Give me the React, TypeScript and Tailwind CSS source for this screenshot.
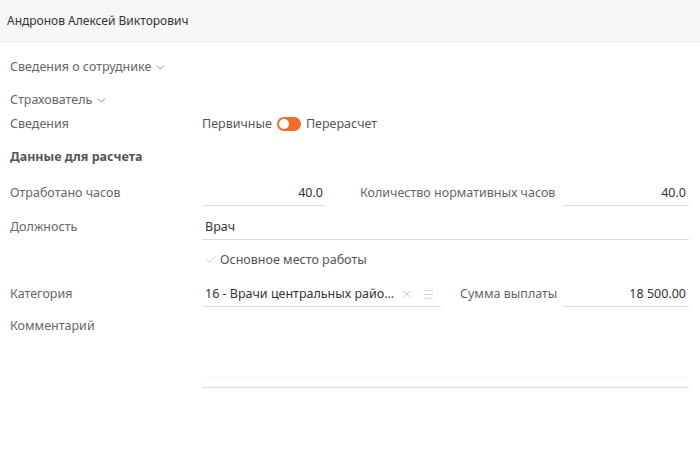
import { Check, ChevronDown, X, Menu } from "lucide-react";

const font = { fontFamily: '"Noto Sans", "Liberation Sans", sans-serif' };

function Field({ value, width, align = "right" }: { value: string; width: string; align?: "left" | "right" }) {
  return (
    <div
      className={`${width} shrink-0 h-[25px] border-b border-[#dcdcdc] flex items-center px-[3px] text-[#333] ${
        align === "right" ? "justify-end" : "justify-start"
      }`}
    >
      {value}
    </div>
  );
}

export default function App() {
  return (
    <div className="w-[700px] h-[472px] bg-white overflow-hidden text-[12.5px] whitespace-nowrap" style={font}>
      {/* header */}
      <div className="h-[42px] bg-[#f7f7f7] border-b border-[#e9e9e9] px-[7px] flex items-center text-[12px] text-[#333]">
        Андронов Алексей Викторович
      </div>

      <div className="pl-[10px] pr-[11px] text-[#666]">
        <div className="mt-[15px] h-[20px] flex items-center gap-[3px]">
          Сведения о сотруднике
          <ChevronDown size={13} strokeWidth={1.5} className="text-[#777]" />
        </div>
        <div className="mt-[13px] h-[20px] flex items-center gap-[3px]">
          Страхователь
          <ChevronDown size={13} strokeWidth={1.5} className="text-[#777]" />
        </div>

        <div className="mt-[4px] h-[20px] flex items-center">
          <div className="w-[192px] shrink-0">Сведения</div>
          <div className="flex items-center gap-[5px] text-[#555]">
            <span>Первичные</span>
            <span className="relative w-[24px] h-[14px] rounded-full bg-[#f26c2c]">
              <span className="absolute left-[2px] top-[2px] w-[10px] h-[10px] rounded-full bg-white" />
            </span>
            <span>Перерасчет</span>
          </div>
        </div>

        <div className="mt-[13px] h-[20px] flex items-center font-bold text-[#555]">Данные для расчета</div>

        {/* row 1 */}
        <div className="mt-[14px] flex items-center">
          <div className="w-[192px] shrink-0">Отработано часов</div>
          <Field value="40.0" width="w-[124px]" />
          <div className="w-[237px] shrink-0 pl-[34px]">Количество нормативных часов</div>
          <Field value="40.0" width="w-[126px]" />
        </div>

        {/* row 2 */}
        <div className="mt-[9px] flex items-center">
          <div className="w-[192px] shrink-0">Должность</div>
          <Field value="Врач" width="flex-1" align="left" />
        </div>

        {/* checkbox */}
        <div className="mt-[10px] h-[20px] flex items-center">
          <div className="w-[192px] shrink-0" />
          <div className="flex items-center gap-[3px] pl-[3px] text-[#555]">
            <Check size={12} strokeWidth={1.5} className="text-[#b5b5b5]" />
            Основное место работы
          </div>
        </div>

        {/* row 4 */}
        <div className="mt-[12px] flex items-center">
          <div className="w-[192px] shrink-0">Категория</div>
          <div className="w-[239px] shrink-0 h-[25px] border-b border-[#dcdcdc] flex items-center pl-[3px] pr-[6px] text-[#333]">
            <span className="flex-1 overflow-hidden">16 - Врачи центральных райо...</span>
            <X size={12} strokeWidth={1.5} className="text-[#bbb] ml-[4px] shrink-0" />
            <Menu size={13} strokeWidth={1.5} className="text-[#ccc] ml-[9px] shrink-0" />
          </div>
          <div className="w-[122px] shrink-0 pl-[19px]">Сумма выплаты</div>
          <Field value="18 500.00" width="w-[126px]" />
        </div>

        {/* comment */}
        <div className="mt-[9px] flex items-start">
          <div className="w-[192px] shrink-0 h-[20px] flex items-center">Комментарий</div>
          <div className="flex-1 h-[72px] border-b border-[#dcdcdc] flex flex-col justify-end">
            <div className="h-[10px] border-t border-[#f6f6f6]" />
          </div>
        </div>
      </div>
    </div>
  );
}
